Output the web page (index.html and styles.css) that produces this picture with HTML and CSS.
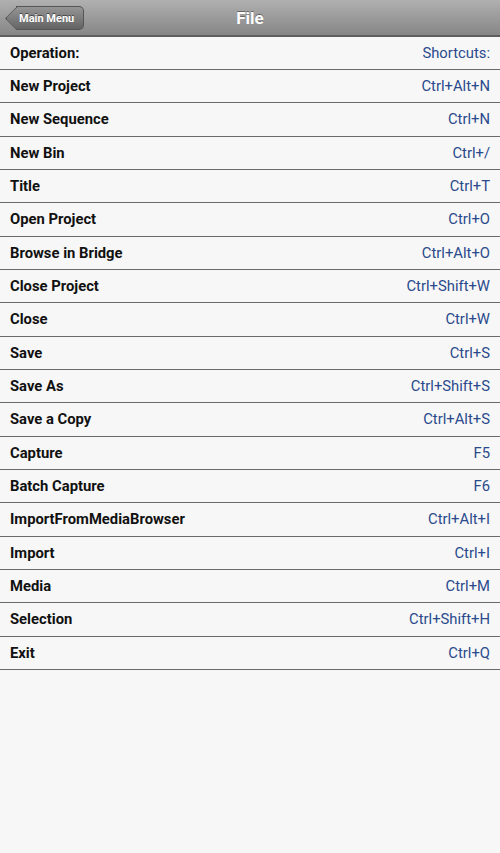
FILE: index.html
```html
<!DOCTYPE html>
<html lang="en">
<head>
  <meta charset="UTF-8">
  <title>File</title>
  <meta name="viewport" content="width=device-width, initial-scale=1">
  <link rel="stylesheet" href="styles.css">
</head>
<body>
<header class="topbar">
  <button class="back-btn">Main Menu</button>
  <h1>File</h1>
</header>
<ul class="shortcut-list">
  <li class="head"><span class="op">Operation:</span><span class="key">Shortcuts:</span></li>
  <li><span class="op">New Project</span><span class="key">Ctrl+Alt+N</span></li>
  <li><span class="op">New Sequence</span><span class="key">Ctrl+N</span></li>
  <li><span class="op">New Bin</span><span class="key">Ctrl+/</span></li>
  <li><span class="op">Title</span><span class="key">Ctrl+T</span></li>
  <li><span class="op">Open Project</span><span class="key">Ctrl+O</span></li>
  <li><span class="op">Browse in Bridge</span><span class="key">Ctrl+Alt+O</span></li>
  <li><span class="op">Close Project</span><span class="key">Ctrl+Shift+W</span></li>
  <li><span class="op">Close</span><span class="key">Ctrl+W</span></li>
  <li><span class="op">Save</span><span class="key">Ctrl+S</span></li>
  <li><span class="op">Save As</span><span class="key">Ctrl+Shift+S</span></li>
  <li><span class="op">Save a Copy</span><span class="key">Ctrl+Alt+S</span></li>
  <li><span class="op">Capture</span><span class="key">F5</span></li>
  <li><span class="op">Batch Capture</span><span class="key">F6</span></li>
  <li><span class="op">ImportFromMediaBrowser</span><span class="key">Ctrl+Alt+I</span></li>
  <li><span class="op">Import</span><span class="key">Ctrl+I</span></li>
  <li><span class="op">Media</span><span class="key">Ctrl+M</span></li>
  <li><span class="op">Selection</span><span class="key">Ctrl+Shift+H</span></li>
  <li><span class="op">Exit</span><span class="key">Ctrl+Q</span></li>
</ul>
</body>
</html>
```

FILE: styles.css
```css
body {
  font-family: Roboto, 'Noto Sans', sans-serif;
  background: #f7f7f7;
  color: #111;
  margin: 0;
  padding: 0;
}
.topbar {
  height: 35px;
  background: linear-gradient(#b0b0b0, #868686);
  border-bottom: 2px solid #5e5e5e;
  display: flex;
  align-items: center;
  justify-content: center;
  position: relative;
}
.topbar h1 {
  margin: 0;
  font-size: 17px;
  font-weight: bold;
  color: #fff;
  text-shadow: 0 -1px 0 #666;
}
.back-btn {
  position: absolute;
  left: 16px;
  top: 6px;
  height: 24px;
  padding: 0 9px 0 3px;
  border: 1px solid #555;
  border-left: none;
  border-radius: 0 5px 5px 0;
  background: linear-gradient(#959595, #636363);
  color: #fff;
  font-family: Roboto, sans-serif;
  font-size: 11px;
  font-weight: bold;
  text-shadow: 0 -1px 0 #444;
  z-index: 1;
}
.back-btn::before {
  content: '';
  position: absolute;
  left: -8px;
  top: 3px;
  width: 16px;
  height: 16px;
  transform: rotate(45deg);
  background: linear-gradient(135deg, #959595, #636363);
  border-left: 1px solid #555;
  border-bottom: 1px solid #555;
  border-radius: 0 0 0 3px;
  z-index: -1;
}
.shortcut-list {
  list-style: none;
  margin: 0;
  padding: 0;
}
.shortcut-list li {
  height: 32.33px;
  display: flex;
  align-items: center;
  justify-content: space-between;
  padding: 0 10px;
  border-bottom: 1px solid #6a6a6a;
  font-size: 14.8px;
}
.shortcut-list li.head {
  height: 32px;
}
.shortcut-list .op {
  font-weight: bold;
  color: #111;
}
.shortcut-list .key {
  color: #2a4a8c;
}
```
